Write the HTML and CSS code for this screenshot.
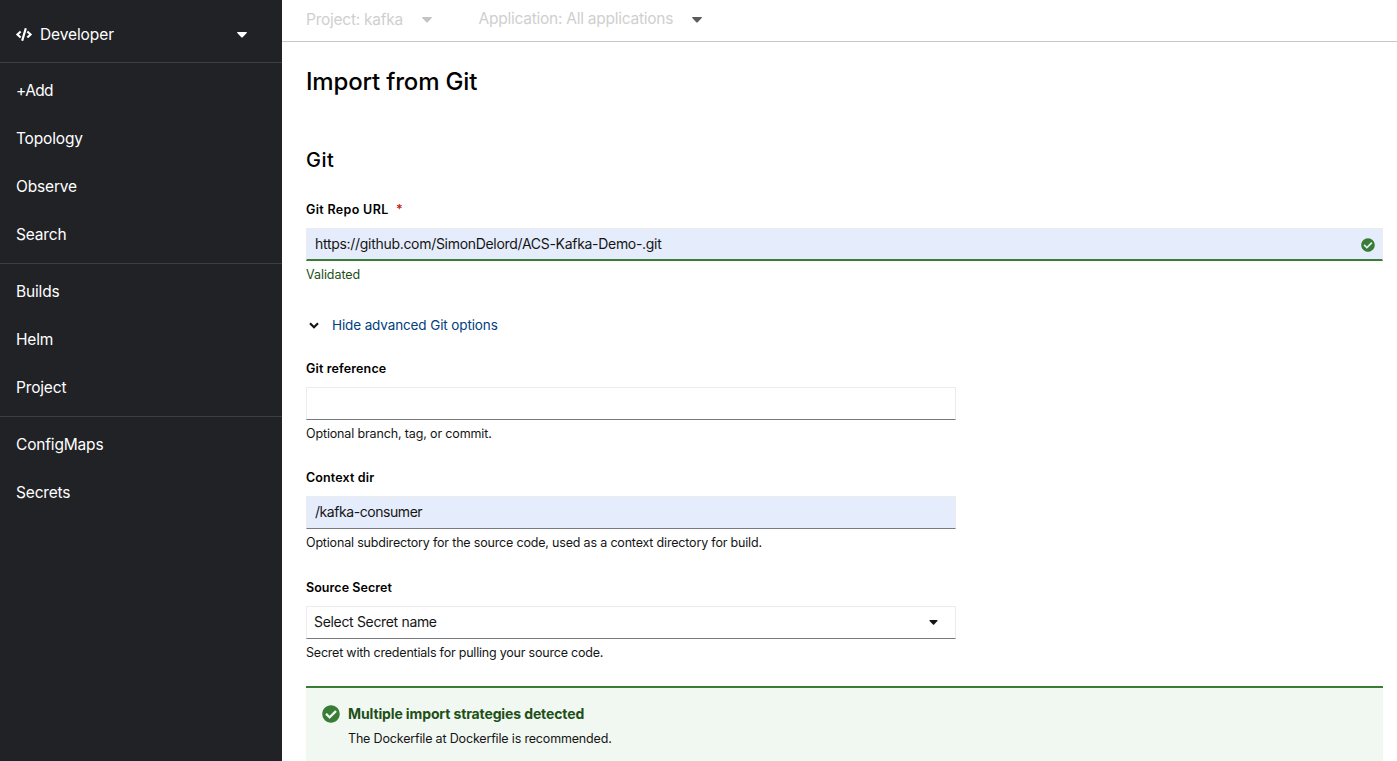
FILE: index.html
```html
<!DOCTYPE html>
<html lang="en">
<head>
<meta charset="utf-8">
<title>Import from Git</title>
<link rel="stylesheet" href="styles.css">
</head>
<body>
<div class="app">
  <aside class="sidebar">
    <div class="perspective">
      <svg class="code-icon" viewBox="0 0 640 512"><path fill="currentColor" d="M278.900 511.500l-61-17.700c-6.400-1.800-10-8.500-8.200-14.900L346.200 8.700c1.800-6.400 8.500-10 14.900-8.200l61 17.700c6.400 1.800 10 8.500 8.200 14.900L293.800 503.300c-1.900 6.400-8.500 10.100-14.900 8.200zm-114-112.200l43.500-46.400c4.600-4.900 4.300-12.700-.8-17.200L117 256l90.600-79.700c5.100-4.500 5.500-12.300.8-17.200l-43.500-46.400c-4.500-4.800-12.100-5.100-17-.5L3.800 247.200c-5.100 4.700-5.100 12.800 0 17.500l144.100 135.100c4.900 4.600 12.500 4.400 17-.5zm327.200.6l144.100-135.100c5.100-4.700 5.100-12.800 0-17.500L492.100 112.100c-4.800-4.500-12.400-4.300-17 .5L431.600 159c-4.600 4.900-4.300 12.700.8 17.200L523 256l-90.600 79.700c-5.100 4.500-5.500 12.300-.8 17.200l43.500 46.400c4.500 4.900 12.100 5.100 17 .6z"/></svg>
      <span class="perspective-name">Developer</span>
      <svg class="caret" viewBox="0 0 10 6"><path fill="currentColor" d="M.7 0h8.600q1 .3.4 1.100L5.700 5.300q-.7.6-1.400 0L.3 1.100Q-.3.300.7 0z"/></svg>
    </div>
    <nav>
      <ul class="nav-group">
        <li class="add">+Add</li><li>Topology</li><li>Observe</li><li>Search</li>
      </ul>
      <ul class="nav-group">
        <li>Builds</li><li>Helm</li><li>Project</li>
      </ul>
      <ul class="nav-group">
        <li>ConfigMaps</li><li>Secrets</li>
      </ul>
    </nav>
  </aside>
  <main class="main">
    <div class="context-bar">
      <div class="selector project"><span>Project: kafka</span><svg class="caret" viewBox="0 0 10 6"><path fill="currentColor" d="M.7 0h8.600q1 .3.4 1.100L5.700 5.300q-.7.6-1.400 0L.3 1.100Q-.3.300.7 0z"/></svg></div>
      <div class="selector application"><span>Application: All applications</span><svg class="caret" viewBox="0 0 10 6"><path fill="currentColor" d="M.7 0h8.600q1 .3.4 1.100L5.700 5.300q-.7.6-1.400 0L.3 1.100Q-.3.300.7 0z"/></svg></div>
    </div>
    <div class="content">
      <h1>Import from Git</h1>
      <h2>Git</h2>
      <div class="field repo">
        <label class="label">Git Repo URL <span class="required">*</span></label>
        <div class="input filled success"><span class="repo-url">https://github.com/SimonDelord/ACS-Kafka-Demo-.git</span>
          <svg class="check" viewBox="0 0 512 512"><path fill="currentColor" d="M504 256c0 136.967-111.033 248-248 248S8 392.967 8 256 119.033 8 256 8s248 111.033 248 248zM227.314 387.314l184-184c6.248-6.248 6.248-16.379 0-22.627l-22.627-22.627c-6.248-6.249-16.379-6.249-22.628 0L216 308.118l-70.059-70.059c-6.248-6.248-16.379-6.248-22.628 0l-22.627 22.627c-6.248 6.248-6.248 16.379 0 22.627l104 104c6.249 6.249 16.379 6.249 22.628.001z"/></svg>
        </div>
        <div class="help valid">Validated</div>
      </div>
      <div class="expander">
        <svg class="chevron" viewBox="0 0 10 7"><path fill="none" stroke="currentColor" stroke-width="2.200" d="M1 1.200l4 4 4-4"/></svg>
        <span>Hide advanced Git options</span>
      </div>
      <div class="field reference">
        <label class="label">Git reference</label>
        <div class="input"></div>
        <div class="help">Optional branch, tag, or commit.</div>
      </div>
      <div class="field context">
        <label class="label">Context dir</label>
        <div class="input filled"><span class="dir">/kafka-consumer</span></div>
        <div class="help">Optional subdirectory for the source code, used as a context directory for build.</div>
      </div>
      <div class="field secret">
        <label class="label">Source Secret</label>
        <div class="input select"><span>Select Secret name</span><svg class="caret" viewBox="0 0 10 6"><path fill="currentColor" d="M.7 0h8.600q1 .3.4 1.100L5.700 5.300q-.7.6-1.400 0L.3 1.100Q-.3.300.7 0z"/></svg></div>
        <div class="help">Secret with credentials for pulling your source code.</div>
      </div>
      <div class="alert">
        <svg class="alert-icon" viewBox="0 0 512 512"><path fill="currentColor" d="M504 256c0 136.967-111.033 248-248 248S8 392.967 8 256 119.033 8 256 8s248 111.033 248 248zM227.314 387.314l184-184c6.248-6.248 6.248-16.379 0-22.627l-22.627-22.627c-6.248-6.249-16.379-6.249-22.628 0L216 308.118l-70.059-70.059c-6.248-6.248-16.379-6.248-22.628 0l-22.627 22.627c-6.248 6.248-6.248 16.379 0 22.627l104 104c6.249 6.249 16.379 6.249 22.628.001z"/></svg>
        <div>
          <div class="alert-title">Multiple import strategies detected</div>
          <div class="alert-text">The Dockerfile at Dockerfile is recommended.</div>
        </div>
      </div>
    </div>
  </main>
</div>
</body>
</html>
```
FILE: styles.css
```css
* { box-sizing: border-box; }
body {
  margin: 0;
  font-family: Inter, "Liberation Sans", sans-serif;
  color: #151515;
  background: #fff;
}
svg { display: block; flex: none; }
.app { display: flex; height: 761px; overflow: hidden; }

.sidebar { width: 282px; flex: none; background: #212226; color: #fff; font-size: 15.5px; letter-spacing: -.17px; }
.perspective { display: flex; align-items: center; height: 62px; padding: 7px 35px 0 16px; }
.code-icon { width: 16px; height: 13px; margin-right: 8px; }
.perspective-name { flex: 1; letter-spacing: -.1px; }
.caret { width: 10px; height: 6px; }
.nav-group { margin: 0; padding: 4px 0; list-style: none; border-top: 1px solid #3c3f42; }
.nav-group li { height: 48px; padding-left: 16px; line-height: 47px; }
.nav-group .add { letter-spacing: -.6px; }

.main { flex: 1; min-width: 0; }
.context-bar { display: flex; height: 42px; padding-left: 24px; border-bottom: 1px solid #c7c7c7; color: #cfcfcf; font-size: 15.5px; line-height: 38px; letter-spacing: -.25px; }
.selector { display: flex; align-items: center; height: 38px; }
.selector .caret { margin-top: 1px; }
.project { width: 172.5px; }
.project span { width: 116px; padding-top: 1px; }
.application span { width: 213.5px; }
.project .caret { color: #c4c4c4; }
.application .caret { color: #5b5b60; }

.content { padding: 24px 14px 0 24px; }
h1 { margin: 0; height: 32px; font-size: 24px; font-weight: 500; line-height: 32px; letter-spacing: -.17px; color: #000; }
h2 { margin: 48px 0 0; height: 28px; font-size: 20px; font-weight: 500; line-height: 28px; letter-spacing: .5px; color: #000; }
.label { display: block; height: 20px; font-size: 12.500px; font-weight: 600; line-height: 20px; letter-spacing: .13px; color: #000; }
.repo .label { letter-spacing: .33px; }
.required { margin-left: 4px; color: #c9190b; }
.input { display: flex; align-items: center; width: 650px; height: 33px; margin-top: 8px; padding: 0 8px; border: 1px solid #ececec; border-bottom-color: #77797c; font-size: 14px; letter-spacing: -.33px; }
.input span { padding-bottom: 1px; }
.filled { background: #e5edfc; }
.success { width: 100%; justify-content: space-between; padding-right: 7px; border-bottom: 2px solid #3a7d37; letter-spacing: -.3px; }
.input .dir { letter-spacing: -.44px; padding-bottom: 2px; }
.check { width: 14px; height: 14px; margin-top: 2px; color: #387c35; }
.help { height: 20px; margin-top: 4px; font-size: 12.500px; line-height: 20px; letter-spacing: -.18px; }
.reference .help { letter-spacing: -.14px; }
.secret .help { letter-spacing: -.21px; }
.valid { color: #1e4f18; letter-spacing: -.05px; }
.repo { margin-top: 26px; }
.expander { display: flex; align-items: center; height: 24px; margin-top: 28px; padding-left: 3px; font-size: 13.500px; letter-spacing: -.12px; }
.expander span { color: #004080; }
.chevron { width: 10px; height: 7px; margin-right: 13px; }
.reference { margin-top: 22px; }
.context { margin-top: 24px; }
.secret { margin-top: 25px; }
.secret .label { letter-spacing: .06px; }
.select { justify-content: space-between; padding: 0 17.500px 0 7px; }
.input.select span { padding-bottom: 2px; }
.select .caret { width: 9px; height: 5px; }
.alert { display: flex; height: 90px; margin-top: 23px; padding: 16px 16px 0; border-top: 2px solid #387c35; background: #f1f8f1; }
.alert-icon { width: 18px; height: 18px; margin: 1px 8px 0 0; color: #387c35; }
.alert-title { font-size: 14px; font-weight: 700; line-height: 20px; letter-spacing: -.12px; color: #1e4f18; }
.alert-text { margin-top: 5px; font-size: 12.500px; line-height: 20px; letter-spacing: -.17px; }
```
